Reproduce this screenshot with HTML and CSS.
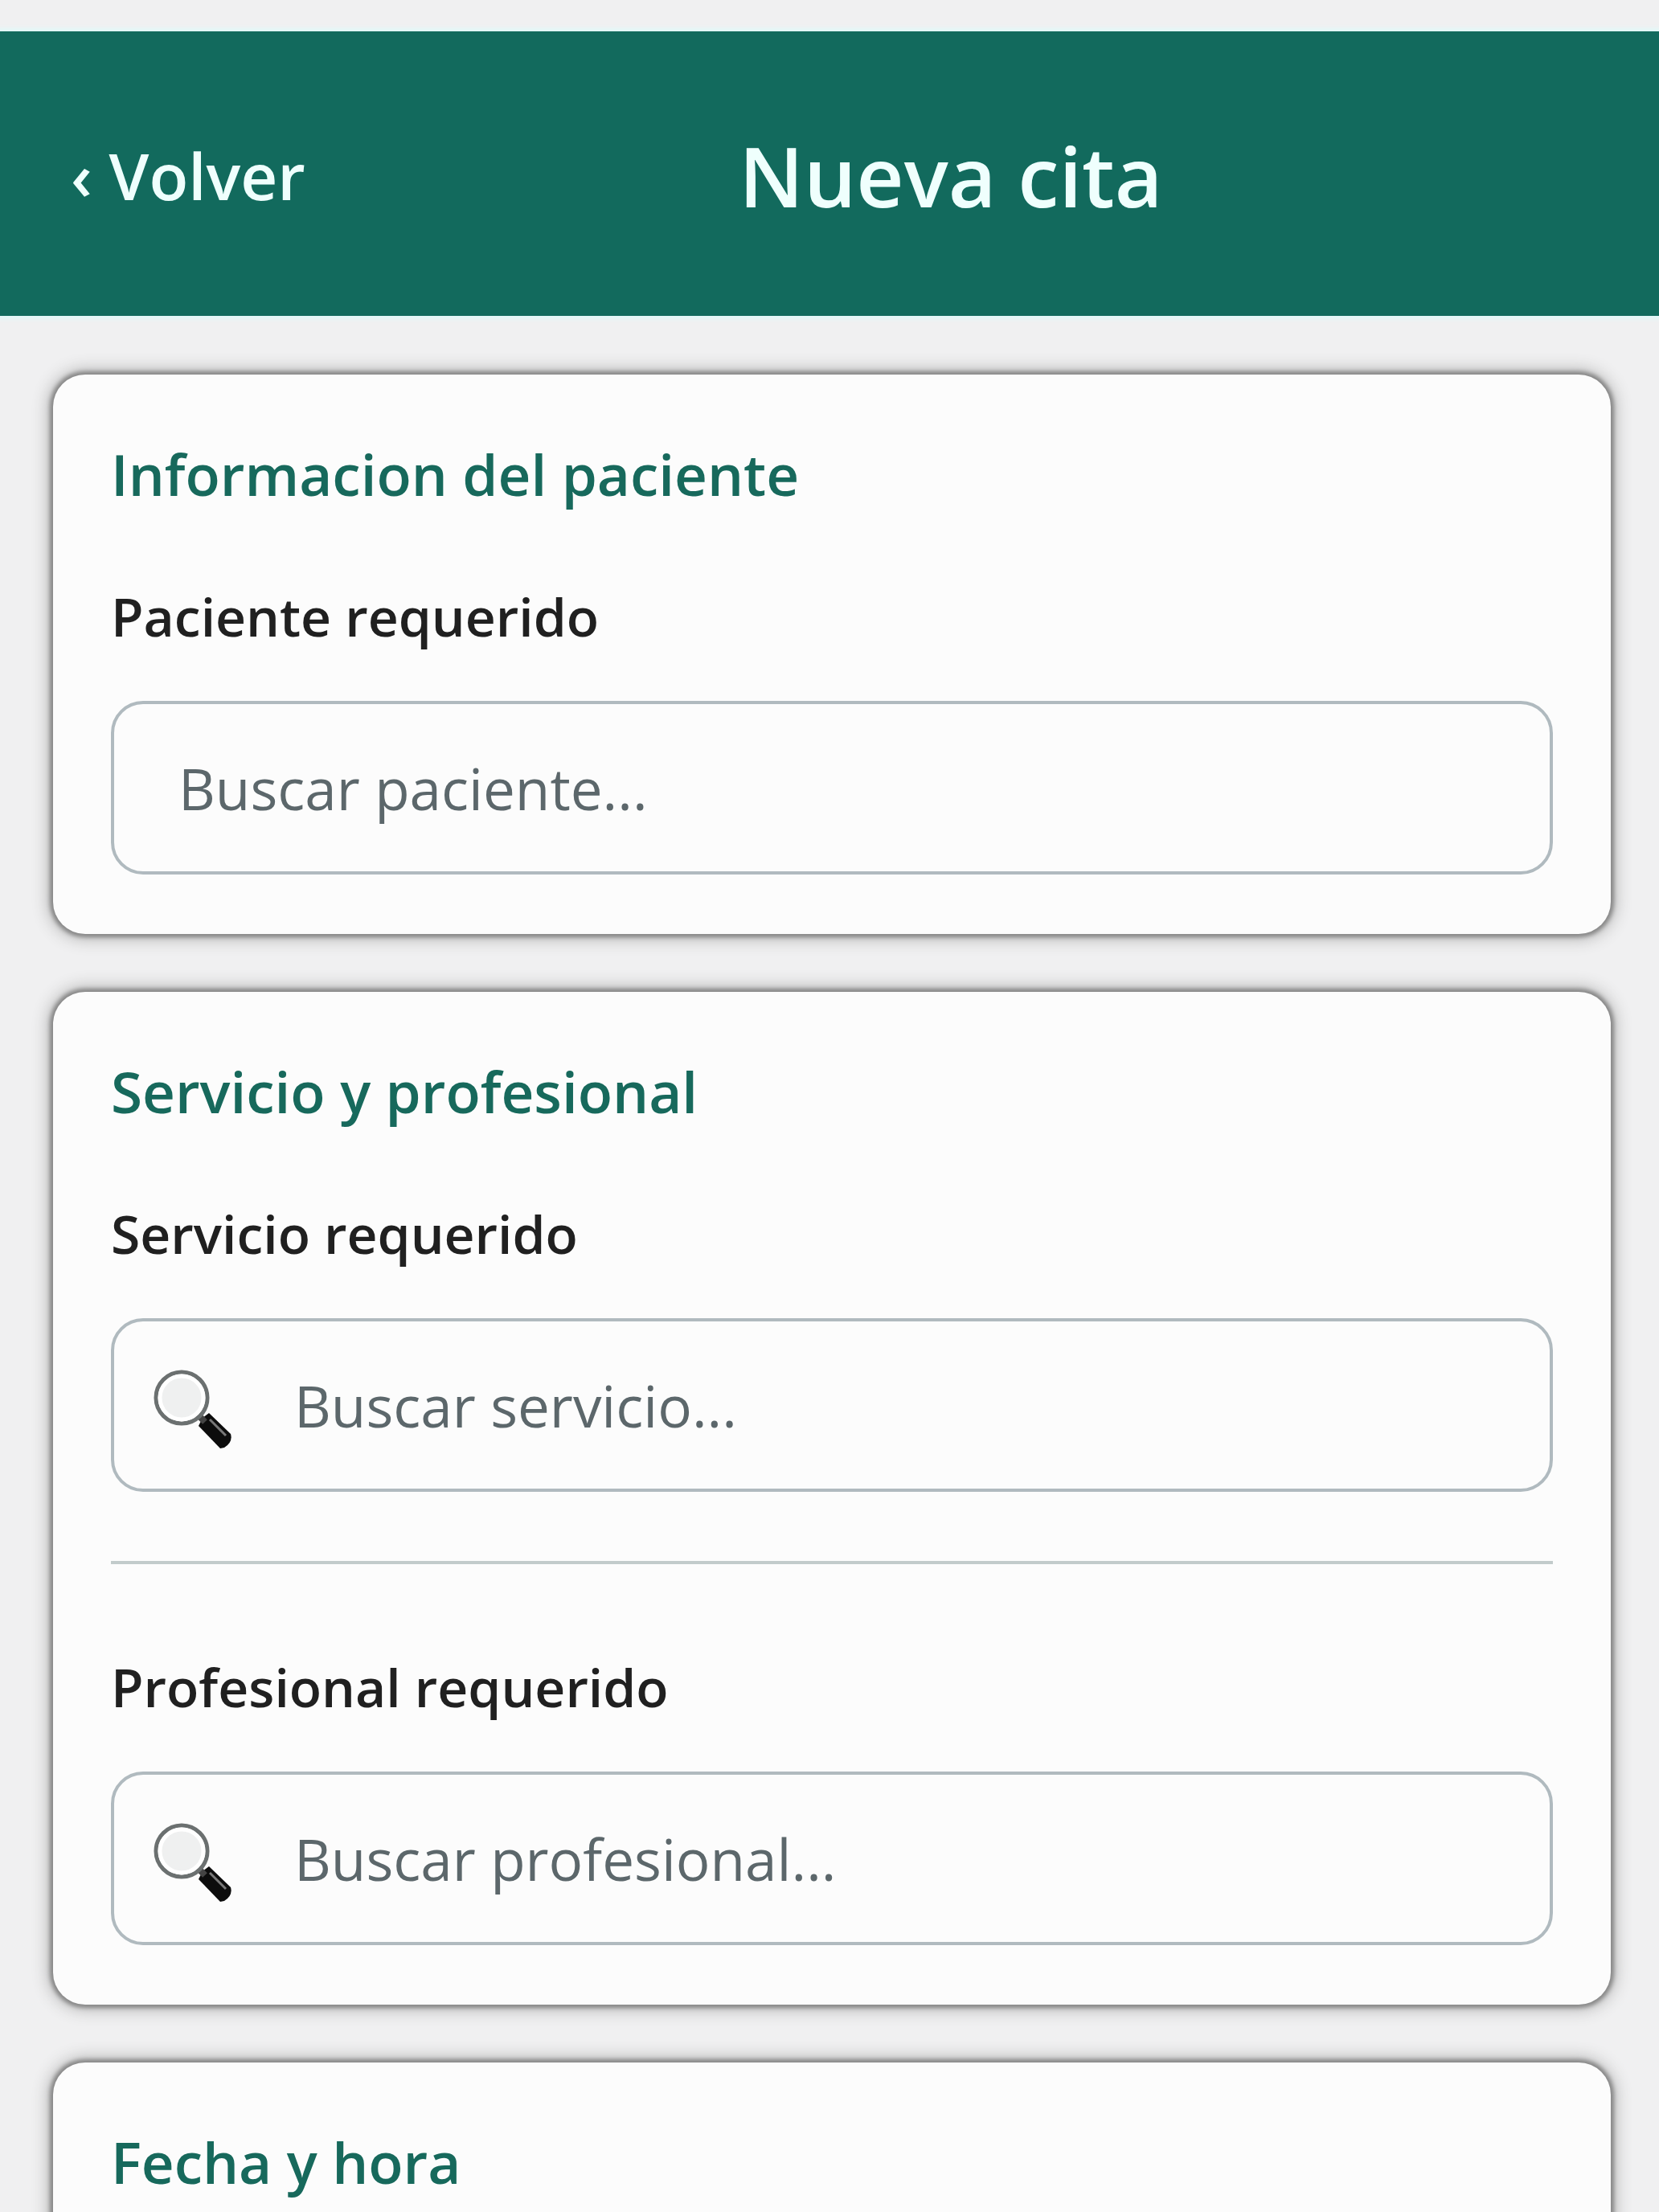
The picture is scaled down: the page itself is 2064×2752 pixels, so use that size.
FILE: index.html
```html
<!DOCTYPE html>
<html lang="es">
<head>
    <meta charset="UTF-8">
    <meta name="viewport" content="width=device-width, initial-scale=1.0">
    <title>Nueva cita</title>
    <link rel="stylesheet" href="styles.css">
</head>
<body>
    <header class="header">
        <a class="back" href="#">‹ Volver</a>
        <h1 class="header-title">Nueva cita</h1>
    </header>

    <main class="form">
        <section class="card">
            <h2 class="card-title">Informacion del paciente</h2>
            <div class="field">
                <label class="label" for="paciente">Paciente requerido</label>
                <div class="input-box">
                    <input class="input" type="text" id="paciente" placeholder="Buscar paciente...">
                </div>
            </div>
        </section>

        <section class="card">
            <h2 class="card-title">Servicio y profesional</h2>
            <div class="field">
                <label class="label" for="servicio">Servicio requerido</label>
                <div class="input-box with-icon">
                    <svg class="icon" viewBox="0 0 100 100" aria-hidden="true">
                        <path d="M62 60 L70 54 L97 80 Q100 90 89 97 L84 98 L57 70 Z" fill="#0c0c0c"/>
                        <path d="M71 62 L91 82" stroke="#777" stroke-width="3"/>
                        <path d="M56 56 L65 65" stroke="#444" stroke-width="8"/>
                        <circle cx="36" cy="35" r="32" fill="#eff0f0" stroke="#6b7070" stroke-width="5"/>
                        <circle cx="36" cy="35" r="27" fill="none" stroke="#fff" stroke-width="5"/>
                    </svg>
                    <input class="input" type="text" id="servicio" placeholder="Buscar servicio...">
                </div>
            </div>
            <hr class="divider">
            <div class="field">
                <label class="label" for="profesional">Profesional requerido</label>
                <div class="input-box with-icon">
                    <svg class="icon" viewBox="0 0 100 100" aria-hidden="true">
                        <path d="M62 60 L70 54 L97 80 Q100 90 89 97 L84 98 L57 70 Z" fill="#0c0c0c"/>
                        <path d="M71 62 L91 82" stroke="#777" stroke-width="3"/>
                        <path d="M56 56 L65 65" stroke="#444" stroke-width="8"/>
                        <circle cx="36" cy="35" r="32" fill="#eff0f0" stroke="#6b7070" stroke-width="5"/>
                        <circle cx="36" cy="35" r="27" fill="none" stroke="#fff" stroke-width="5"/>
                    </svg>
                    <input class="input" type="text" id="profesional" placeholder="Buscar profesional...">
                </div>
            </div>
        </section>

        <section class="card">
            <h2 class="card-title">Fecha y hora</h2>
        </section>
    </main>
</body>
</html>
```
FILE: styles.css
```css
* {
    margin: 0;
    padding: 0;
    box-sizing: border-box;
}

body {
    font-family: 'Open Sans', 'Noto Sans', sans-serif;
    background: #f0f0f1;
    height: 100vh;
    padding-top: 39px;
    display: flex;
    flex-direction: column;
    overflow: hidden;
    color: #202020;
}

.header {
    display: flex;
    align-items: center;
    flex-shrink: 0;
    padding: 106px 78px 102px 88px;
    background: #126a5d;
    box-shadow: 0 0 5px 4px #e2f8f8;
}

.back {
    color: #effffd;
    font-size: 80px;
    font-weight: 600;
    line-height: 146px;
    text-decoration: none;
}

.header-title {
    flex: 1;
    text-align: center;
    color: #effffd;
    font-size: 103px;
    font-weight: 600;
    line-height: 146px;
}

.form {
    flex: 1;
    display: flex;
    flex-direction: column;
    gap: 72px;
    min-height: 0;
    padding: 73px 60px 0 66px;
    overflow: hidden;
}

.card {
    flex-shrink: 0;
    padding: 72px 72px 74px;
    background: #fcfcfc;
    border-radius: 40px;
    box-shadow: 0 0 5px 4px #888, 0 0 20px 6px #b4b4b4;
}

.card-title {
    color: #17695c;
    font-size: 71px;
    font-weight: 600;
    line-height: 104px;
    margin-bottom: 80px;
}

.label {
    display: block;
    font-size: 66px;
    font-weight: 600;
    line-height: 88px;
    margin-bottom: 62px;
}

.input-box {
    display: flex;
    align-items: center;
    height: 216px;
    padding: 0 80px;
    border: 4px solid #b0babf;
    border-radius: 40px;
}

.with-icon {
    gap: 76px;
    padding-left: 48px;
}

.icon {
    width: 100px;
    height: 100px;
    flex-shrink: 0;
    margin-top: 12px;
}

.input {
    flex: 1;
    min-width: 0;
    border: none;
    outline: none;
    background: none;
    font-family: inherit;
    font-size: 71px;
    color: #202020;
}

.input::placeholder {
    color: #5c676b;
    opacity: 1;
}

.divider {
    border: none;
    height: 4px;
    background: #c2cbcb;
    margin: 86px 0 108px;
}
```
